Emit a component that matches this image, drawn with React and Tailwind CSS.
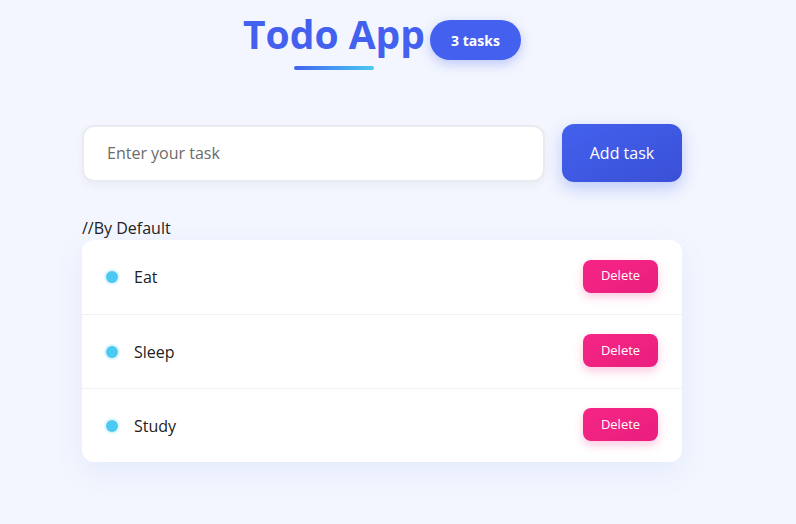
import React from 'react';

const TASKS = ['Eat', 'Sleep', 'Study'];

export default function App() {
  return (
    <div
      className="min-h-[524px] w-full bg-[#f3f6fe]"
      style={{ fontFamily: '"Open Sans", "Noto Sans", sans-serif' }}
    >
      <div className="ml-[82px] w-[600px] pt-[7px]">
        {/* Header */}
        <header className="flex items-start justify-center gap-[5px]">
          <div className="flex flex-col items-center">
            <h1 className="text-[39px] font-bold leading-[53px] text-[#4361ee]">
              Todo App
            </h1>
            <div className="mt-[6px] h-[4px] w-[80px] rounded-full bg-gradient-to-r from-[#4361ee] to-[#4cc9f0]" />
          </div>
          <span className="mt-[13px] flex h-[40px] w-[91px] items-center justify-center rounded-full bg-[#4361ee] text-[14px] font-bold text-white shadow-[0_4px_12px_rgba(67,97,238,0.3)]">
            3 tasks
          </span>
        </header>

        {/* Input row */}
        <div className="mt-[54px] flex items-center gap-[17px]">
          <input
            type="text"
            placeholder="Enter your task"
            className="h-[57px] w-[463px] rounded-[12px] border-2 border-[#e9ebf0] bg-white px-[23px] text-[16px] text-[#333] shadow-[0_4px_10px_rgba(0,0,0,0.04)] outline-none placeholder:text-[#6b6b6b]"
          />
          <button className="h-[58px] w-[120px] rounded-[12px] bg-gradient-to-br from-[#4361ee] to-[#3a50d6] text-[16px] font-medium text-white shadow-[0_6px_16px_rgba(67,97,238,0.3)]">
            Add task
          </button>
        </div>

        <p className="mt-[35px] text-[16px] leading-[22px] text-[#222]">//By Default</p>

        {/* Task list */}
        <ul className="mt-[1px] overflow-hidden rounded-[12px] bg-white shadow-[0_10px_30px_rgba(67,97,238,0.08)]">
          {TASKS.map((task, idx) => (
            <li
              key={task}
              className={`flex h-[74px] items-center px-[24px] ${idx > 0 ? 'border-t border-[#f0f1f4]' : ''}`}
            >
              <span className="h-[12px] w-[12px] rounded-full bg-[#4cc9f0] ring-2 ring-[#e3f6fd]" />
              <span className="ml-[16px] text-[16px] text-[#222]">{task}</span>
              <button className="ml-auto -translate-y-[1px] h-[33px] w-[75px] rounded-[8px] bg-gradient-to-br from-[#f72585] to-[#e91e7e] text-[13px] font-medium text-white shadow-[0_4px_10px_rgba(247,37,133,0.25)]">
                Delete
              </button>
            </li>
          ))}
        </ul>
      </div>
    </div>
  );
}
